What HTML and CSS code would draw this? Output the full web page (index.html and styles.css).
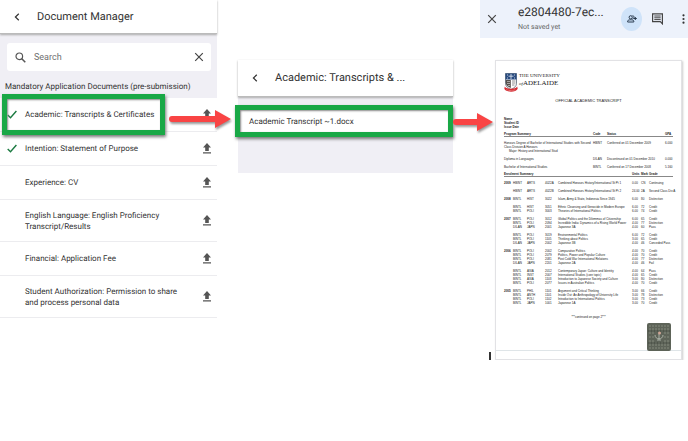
FILE: index.html
```html
<!DOCTYPE html>
<html lang="en">
<head>
<meta charset="utf-8">
<title>Document Manager</title>
<link rel="stylesheet" href="styles.css">
</head>
<body>
<svg class="defs" aria-hidden="true">
  <symbol id="upload" viewBox="0 0 8 11"><path d="M4 0 8 4.4H5.8V8H2.2V4.4H0z M0 9.3h8v1.3H0z" fill="#555"/></symbol>
  <symbol id="check" viewBox="0 0 10 9"><path d="M.7 5 3.5 7.8 9.4 1" fill="none" stroke="#1b7a41" stroke-width="1.4"/></symbol>
  <symbol id="back" viewBox="0 0 6 8"><path d="M4.8.8 1.4 4l3.4 3.2" fill="none" stroke="#333" stroke-width="1.2"/></symbol>
  <symbol id="close" viewBox="0 0 10 10"><path d="m1.2 1.2 7.6 7.6m0-7.6L1.2 8.8" fill="none" stroke="#444" stroke-width="1.2"/></symbol>
</svg>
<main class="steps">
  <section class="panel manager">
    <header class="bar">
      <button class="icon-btn" aria-label="Back"><svg class="i-back"><use href="#back"/></svg></button>
      <h1>Document Manager</h1>
    </header>
    <div class="filter">
      <div class="search">
        <svg class="i-search" viewBox="0 0 11 11"><circle cx="4.3" cy="4.3" r="3.3" fill="none" stroke="#555" stroke-width="1.2"/><path d="m6.8 6.8 3.5 3.5" stroke="#555" stroke-width="1.5"/></svg>
        <input type="text" placeholder="Search" aria-label="Search">
        <button class="icon-btn" aria-label="Clear search"><svg class="i-close"><use href="#close"/></svg></button>
      </div>
      <h2>Mandatory Application Documents (pre-submission)</h2>
    </div>
    <ul class="docs">
      <li class="marked"><svg class="i-check"><use href="#check"/></svg><span>Academic: Transcripts &amp; Certificates</span><button class="icon-btn" aria-label="Upload transcripts"><svg class="i-upload"><use href="#upload"/></svg></button>
        <i class="highlight"></i>
        <svg class="arrow" viewBox="0 0 62 20"><path d="M3 7h43V1l16 9-16 9v-6H3a3 3 0 0 1 0-6z" fill="#f94444"/></svg>
      </li>
      <li><svg class="i-check"><use href="#check"/></svg><span>Intention: Statement of Purpose</span><button class="icon-btn" aria-label="Upload statement"><svg class="i-upload"><use href="#upload"/></svg></button></li>
      <li><i class="i-check"></i><span>Experience: CV</span><button class="icon-btn" aria-label="Upload CV"><svg class="i-upload"><use href="#upload"/></svg></button></li>
      <li class="tall"><i class="i-check"></i><span>English Language: English Proficiency Transcript/Results</span><button class="icon-btn" aria-label="Upload English results"><svg class="i-upload"><use href="#upload"/></svg></button></li>
      <li><i class="i-check"></i><span>Financial: Application Fee</span><button class="icon-btn" aria-label="Upload fee"><svg class="i-upload"><use href="#upload"/></svg></button></li>
      <li class="tall"><i class="i-check"></i><span>Student Authorization: Permission to share and process personal data</span><button class="icon-btn" aria-label="Upload authorization"><svg class="i-upload"><use href="#upload"/></svg></button></li>
    </ul>
  </section>

  <section class="panel folder">
    <header class="bar">
      <button class="icon-btn" aria-label="Back"><svg class="i-back"><use href="#back"/></svg></button>
      <h1>Academic: Transcripts &amp; ...</h1>
    </header>
    <div class="files">
      <div class="file"><a href="#doc">Academic Transcript ~1.docx</a>
        <i class="highlight"></i>
        <svg class="arrow" viewBox="0 0 40 20"><path d="M3 7h21V1l16 9-16 9v-6H3a3 3 0 0 1 0-6z" fill="#f94444"/></svg>
      </div>
    </div>
  </section>

  <section class="panel viewer" id="doc">
    <header class="viewer-bar">
      <button class="icon-btn" aria-label="Close"><svg class="i-close"><use href="#close"/></svg></button>
      <div class="name"><h1>e2804480-7ec...</h1><p>Not saved yet</p></div>
      <button class="icon-btn share" aria-label="Share"><svg viewBox="0 0 10 8"><circle cx="3.7" cy="2.3" r="1.6" fill="none" stroke="#26384c" stroke-width="1"/><path d="M.6 7V6.3C.6 5 2.5 4.8 3.7 4.8s3.1.2 3.1 1.5V7zM5.5.6c2 0 2 3.2 0 3.3M8.3 2v3M6.8 3.5h3" fill="none" stroke="#26384c" stroke-width="1"/></svg></button>
      <button class="icon-btn" aria-label="Comments"><svg class="i-comment" viewBox="0 0 11 12"><path d="M.6.8h9.8v10L8.3 8.7H.6z" fill="none" stroke="#444" stroke-width="1.2"/><path d="M2.3 3h6.4M2.3 4.8h6.4M2.3 6.6h6.4" stroke="#444" stroke-width="1"/></svg></button>
      <button class="icon-btn more" aria-label="More"><svg class="i-more" viewBox="0 0 3 10"><circle cx="1.5" cy="1.3" r="1.1"/><circle cx="1.5" cy="5" r="1.1"/><circle cx="1.5" cy="8.7" r="1.1"/></svg></button>
    </header>
    <div class="page-row">
      <i class="caret"></i>
      <article class="paper">
        <div class="brand">
          <svg class="crest" viewBox="0 0 14 20"><path d="M1.5.5h11v10c0 3-3 5-5.500 6-2.500-1-5.500-3-5.500-6z" fill="#fff" stroke="#234" stroke-width=".6"/><path d="M1.500.5h11v6h-11z" fill="#284b80"/><path d="M7 1v5M4.500 3.200h5M3.500 1.500v1M10.500 1.500v1M3.500 4.500v1M10.500 4.500v1" stroke="#e9eef5" stroke-width=".8"/><path d="M1.800 7h5v8C3 13.500 2 12 1.800 10z" fill="#55514d"/><path d="M3 8.500h3M3 10.500h3M4 12.500h2" stroke="#ddd" stroke-width=".6"/><path d="M8 8h3.500M8 10h3.500M8 12h2.500" stroke="#777" stroke-width=".8"/><path d="M.8 13.500c1.500 3 10.900 3 12.400 0l.5 2.300c-1.500 3.900-11.900 3.900-13.400 0z" fill="#d52f35"/><path d="M2.500 16.600c2.800 1.300 6.200 1.300 9 0" stroke="#f3b5b5" stroke-width=".6" stroke-dasharray=".8 .5" fill="none"/></svg>
          <p class="wordmark"><span>THE UNIVERSITY</span><b><i>of</i>ADELAIDE</b></p>
        </div>
        <h3>OFFICIAL ACADEMIC TRANSCRIPT</h3>
        <p class="ident">Name<br>Student ID<br>Issue Date</p>
        <table class="program">
          <colgroup><col><col class="c-code"><col class="c-status"><col class="c-gpa"></colgroup>
          <thead><tr><th>Program Summary</th><th>Code</th><th>Status</th><th>GPA</th></tr></thead>
          <tbody>
            <tr><td>Honours Degree of Bachelor of International Studies with Second<br>Class Division A Honours<br><span class="major">Major: History and International Stud</span></td><td>HBINT</td><td>Conferred on 01 December 2009</td><td>6.000</td></tr>
            <tr><td>Diploma in Languages</td><td>DILAN</td><td>Discontinued on 01 December 2010</td><td>0.000</td></tr>
            <tr><td>Bachelor of International Studies</td><td>BINTL</td><td>Conferred on 17 December 2008</td><td>5.160</td></tr>
          </tbody>
        </table>
        <table class="enrolment">
          <colgroup><col class="e-year"><col class="e-prog"><col class="e-area"><col class="e-num"><col><col class="e-unit"><col class="e-mark"><col class="e-grade"></colgroup>
          <thead><tr><th colspan="5">Enrolment Summary</th><th>Units</th><th>Mark</th><th>Grade</th></tr></thead>
          <tbody><tr><th>2009</th><td>HBINT</td><td>ARTS</td><td>4022A</td><td>Combined Honours History/International St Pt 1</td><td>0.00</td><td>CN</td><td>Continuing</td></tr></tbody>
          <tbody><tr><th></th><td>HBINT</td><td>ARTS</td><td>4022B</td><td>Combined Honours History/International St Pt 2</td><td>24.00</td><td>2A</td><td>Second Class Div A</td></tr></tbody>
          <tbody><tr><th>2008</th><td>BINTL</td><td>HIST</td><td>3022</td><td>Islam, Army &amp; State, Indonesia Since 1945</td><td>6.00</td><td>80</td><td>Distinction</td></tr></tbody>
          <tbody><tr><th></th><td>BINTL</td><td>HIST</td><td>3051</td><td>Ethnic Cleansing and Genocide in Modern Europe</td><td>6.00</td><td>72</td><td>Credit</td></tr>
          <tr><th></th><td>BINTL</td><td>POLI</td><td>3003</td><td>Theories of International Politics</td><td>6.00</td><td>74</td><td>Credit</td></tr></tbody>
          <tbody><tr><th>2007</th><td>BINTL</td><td>POLI</td><td>3012</td><td>Global Politics and the Dilemmas of Citizenship</td><td>6.00</td><td>65</td><td>Credit</td></tr>
          <tr><th></th><td>BINTL</td><td>POLI</td><td>2094</td><td>Incredible India: Dynamics of a Rising World Power</td><td>4.00</td><td>77</td><td>Distinction</td></tr>
          <tr><th></th><td>DILAN</td><td>JAPN</td><td>2001</td><td>Japanese 3A</td><td>4.00</td><td>60</td><td>Pass</td></tr></tbody>
          <tbody><tr><th></th><td>BINTL</td><td>POLI</td><td>3019</td><td>Environmental Politics</td><td>6.00</td><td>72</td><td>Credit</td></tr>
          <tr><th></th><td>BINTL</td><td>POLI</td><td>1105</td><td>Thinking about Politics</td><td>3.00</td><td>65</td><td>Credit</td></tr>
          <tr><th></th><td>DILAN</td><td>JAPN</td><td>2002</td><td>Japanese 3B</td><td>4.00</td><td>46</td><td>Conceded Pass</td></tr></tbody>
          <tbody><tr><th>2006</th><td>BINTL</td><td>POLI</td><td>2002</td><td>Comparative Politics</td><td>4.00</td><td>70</td><td>Credit</td></tr>
          <tr><th></th><td>BINTL</td><td>POLI</td><td>2079</td><td>Politics, Power and Popular Culture</td><td>4.00</td><td>70</td><td>Credit</td></tr>
          <tr><th></th><td>BINTL</td><td>POLI</td><td>2081</td><td>Post Cold War International Relations</td><td>4.00</td><td>77</td><td>Distinction</td></tr>
          <tr><th></th><td>DILAN</td><td>JAPN</td><td>2201</td><td>Japanese 2A</td><td>4.00</td><td>46</td><td>Fail</td></tr></tbody>
          <tbody><tr><th></th><td>BINTL</td><td>ASIA</td><td>2012</td><td>Contemporary Japan: Culture and Identity</td><td>4.00</td><td>64</td><td>Pass</td></tr>
          <tr><th></th><td>BINTL</td><td>INST</td><td>2007</td><td>International Studies (core topic)</td><td>4.00</td><td>65</td><td>Credit</td></tr>
          <tr><th></th><td>BINTL</td><td>ASIA</td><td>1103</td><td>Introduction to Japanese Society and Culture</td><td>3.00</td><td>80</td><td>Distinction</td></tr>
          <tr><th></th><td>BINTL</td><td>POLI</td><td>2077</td><td>Issues in Australian Politics</td><td>4.00</td><td>70</td><td>Credit</td></tr></tbody>
          <tbody><tr><th>2005</th><td>BINTL</td><td>PHIL</td><td>1101</td><td>Argument and Critical Thinking</td><td>3.00</td><td>66</td><td>Credit</td></tr>
          <tr><th></th><td>BINTL</td><td>ANTH</td><td>1101</td><td>Inside Out: An Anthropology of University Life</td><td>3.00</td><td>78</td><td>Distinction</td></tr>
          <tr><th></th><td>BINTL</td><td>POLI</td><td>1102</td><td>Introduction to International Politics</td><td>3.00</td><td>73</td><td>Credit</td></tr>
          <tr><th></th><td>BINTL</td><td>JAPN</td><td>1001</td><td>Japanese 1A</td><td>3.00</td><td>70</td><td>Credit</td></tr></tbody>
        </table>
        <p class="continued">***continued on page 2***</p>
        <svg class="seal" viewBox="0 0 24 28"><rect width="24" height="28" rx="2" fill="#5d6358"/><path d="M2 3h20M2 6h20M2 10h5m10 0h5M2 14h5m10 0h5M2 18h5m10 0h5M2 22h20M2 25h20" stroke="#858b7d" stroke-width="1" stroke-dasharray="2 1"/><path d="M1 8h22M1 20h22" stroke="#43483f" stroke-width="1" stroke-dasharray="1 2"/><path d="M8 12c0 5 8 5 8 0M12 11v6M10 17h4" fill="none" stroke="#aab0a5" stroke-width="1"/><circle cx="12.500" cy="10" r="1.500" fill="#d0a696"/></svg>
      </article>
    </div>
  </section>
</main>
</body>
</html>
```
FILE: styles.css
```css
* { box-sizing: border-box; }
body { margin: 0; background: #fff; color: #333; font: 8px/11px Roboto, sans-serif; text-rendering: geometricPrecision; }
h1, h2, h3, p, ul { margin: 0; padding: 0; font-weight: 400; }
.defs { position: absolute; width: 0; height: 0; }
svg { display: block; flex: none; }
.icon-btn { display: flex; align-items: center; justify-content: center; flex: none; padding: 0; border: 0; background: none; }

.steps { display: grid; grid-template-columns: 217fr 21fr 215fr 27fr 208fr; align-items: start; }
.panel { min-width: 0; }
.folder { grid-column: 3; }
.viewer { grid-column: 5; }

.i-back { width: 6px; height: 8px; }
.i-close { width: 10px; height: 10px; }
.i-search { width: 11px; height: 11px; }
.i-upload { width: 8px; height: 11px; }
.i-check { width: 10px; height: 9px; flex: none; }
.i-comment { width: 11px; height: 12px; }
.i-more { width: 3px; height: 10px; fill: #333; }

.bar { position: relative; display: flex; align-items: center; gap: 17px; height: 34px; padding-left: 14px; background: #fff; border-bottom: 1px solid #bbb; box-shadow: 0 1px 2px #aaa; }
.bar h1 { font-size: 11px; line-height: 16px; white-space: nowrap; }

.filter { padding: 9px 6px 6px 7px; background: #f0eff5; }
.search { display: flex; align-items: center; gap: 8px; height: 28px; padding: 0 7px 0 8px; background: #fff; border-radius: 3px; }
.search input { flex: 1; min-width: 0; padding: 0; border: 0; outline: 0; background: none; font: 9px/12px Roboto, sans-serif; }
.search input::placeholder { color: #707070; opacity: 1; }
.filter h2 { margin: 10px -2px 0; font-size: 8px; line-height: 11px; white-space: nowrap; }

.docs { list-style: none; }
.docs li { position: relative; display: flex; align-items: center; gap: 8px; min-height: 34px; padding: 0 6px 0 7px; border-bottom: 1px solid #ececef; }
.docs li.tall { min-height: 42px; }
.docs span { flex: 1; padding-right: 16px; }

.highlight { position: absolute; border: 5px solid #19a846; box-shadow: 1px 2px 3px #777, inset 1px 1px 2px #888; }
.arrow { position: absolute; height: 20px; z-index: 2; filter: drop-shadow(1px 2px 1px #999); }
.docs .highlight { top: -4px; bottom: -4px; left: 2px; width: 163px; }
.docs .arrow { width: 62px; top: 11px; left: 169px; }

.folder { margin-top: 60px; }
.folder .bar { height: 37px; }
.files { padding: 12px 0 40px; background: #f0eff5; }
.file { position: relative; display: flex; align-items: center; height: 24px; padding-left: 11px; background: #fff; }
.file a { color: #333; text-decoration: none; white-space: nowrap; }
.file .highlight { inset: -4px 0 -4px -3px; }
.file .arrow { width: 40px; top: 3px; left: 100%; }

.viewer-bar { display: flex; align-items: center; height: 38px; padding-left: 7px; background: #edf2fb; }
.name { flex: 1; min-width: 0; padding-left: 21px; }
.name h1 { font-size: 12px; line-height: 16px; white-space: nowrap; }
.name p { font-size: 7px; line-height: 14px; color: #666; }
.share { width: 21px; height: 24px; margin-right: 10px; border-radius: 50%; background: #cfe3f9; }
.share svg { width: 10px; height: 8px; }
.more { padding: 0 3px 0 19px; }

.page-row { display: flex; align-items: flex-end; padding: 22px 6px 0 9px; }
.caret { flex: none; width: 2px; height: 12px; margin: 0 4px -4px 0; background: #333; }
.paper { flex: 1; min-width: 0; padding: 12px 8px 8px 8px; border: 1px solid #e2e2e5; box-shadow: 1px 1px 2px #ccc; background: linear-gradient(#dfe5e8, #dfe5e8) 0 calc(100% - 8px) / 100% 1px no-repeat #fff; font: 3px/4px "Liberation Sans", sans-serif; text-rendering: auto; color: #222; }
.brand { display: flex; gap: 1px; }
.crest { width: 14px; height: 20px; }
.wordmark { display: flex; flex-direction: column; font-family: "Liberation Serif", serif; font-size: 5px; line-height: 6px; white-space: nowrap; }
.wordmark b { font-size: 7px; line-height: 8px; font-weight: 400; }
.wordmark i { font-size: 5px; }
.paper h3 { margin-top: 6px; font-size: 4px; line-height: 4px; text-align: center; }
.ident { margin: 14px 0 4px; font-weight: 700; }
table { width: 100%; table-layout: fixed; border-collapse: separate; border-spacing: 0; }
th, td { padding: 0; text-align: left; vertical-align: top; white-space: nowrap; line-height: 4px; }
thead th { line-height: 3px; border-bottom: 1px solid #888; }
.program tbody td { padding-top: 4px; }
.c-code { width: 14px; }
.c-status { width: 58px; }
.c-gpa { width: 8px; }
.major { padding-left: 5px; }
.enrolment { margin-top: 4px; }
.enrolment tbody tr:first-child > * { padding-top: 4px; }
.e-year { width: 9px; }
.e-prog { width: 14px; }
.e-area { width: 18px; }
.e-num { width: 13px; }
.e-unit { width: 9px; }
.e-mark { width: 8px; }
.e-grade { width: 24px; }
.continued { margin-top: 10px; text-align: center; }
.seal { width: 24px; height: 28px; margin: 4px 2px 0 auto; }
```
